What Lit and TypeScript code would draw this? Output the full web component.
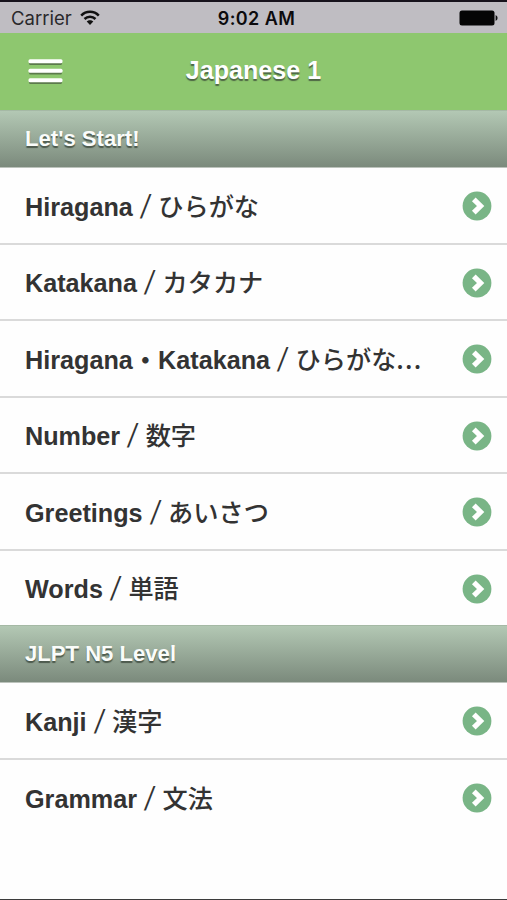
import { LitElement, html, css } from "lit";
import { customElement } from "lit/decorators.js";

interface Lesson { en: string; ja: string; en2?: string; cut?: boolean; }
interface Section { title: string; lessons: Lesson[]; }

const SECTIONS: Section[] = [
  {
    title: "Let's Start!",
    lessons: [
      { en: "Hiragana", ja: "ひらがな" },
      { en: "Katakana", ja: "カタカナ" },
      { en: "Hiragana", en2: "Katakana", ja: "ひらがな", cut: true },
      { en: "Number", ja: "数字" },
      { en: "Greetings", ja: "あいさつ" },
      { en: "Words", ja: "単語" },
    ],
  },
  {
    title: "JLPT N5 Level",
    lessons: [
      { en: "Kanji", ja: "漢字" },
      { en: "Grammar", ja: "文法" },
    ],
  },
];

@customElement("app-root")
export class AppRoot extends LitElement {
  static styles = css`
    :host {
      display: flex;
      flex-direction: column;
      box-sizing: border-box;
      height: 900px;
      background: #fefefe;
      border-bottom: 1px solid #3c3c3c;
      font-family: "Liberation Sans", "Noto Sans CJK JP", sans-serif;
      overflow: hidden;
    }
    .status {
      box-sizing: border-box;
      flex: none;
      height: 33px;
      border-top: 2px solid #17131c;
      background: #bfbdc2;
      display: grid;
      grid-template-columns: 1fr auto 1fr;
      align-items: center;
      padding: 1px 9px 0 11px;
      color: #111;
      font: 19px/28px "Inter", sans-serif;
    }
    .carrier { display: flex; align-items: center; gap: 8px; color: #29282b; font-size: 18.5px; }
    .wifi { display: block; margin-bottom: 1px; }
    .time { font-weight: 600; font-size: 18px; letter-spacing: 0.4px; color: #0c0b0d; padding: 2px 0 0 4px; }
    .battery { justify-self: end; display: block; }
    .nav {
      flex: none;
      box-sizing: border-box;
      height: 77px;
      background: #8ec76f;
      display: grid;
      grid-template-columns: 1fr auto 1fr;
      align-items: center;
      padding: 0 28px;
    }
    .menu { display: block; margin-bottom: 2px; }
    .title {
      color: #fff;
      font-weight: bold;
      font-size: 25.1px;
      line-height: 30px;
      text-shadow: 0 2px 1px rgba(50, 60, 50, 0.7);
      padding-bottom: 3px;
    }
    .heading {
      flex: none;
      box-sizing: border-box;
      height: 58px;
      padding: 0 25px;
      border-top: 1px solid #a5b9a5;
      border-bottom: 1px solid #bcc3bc;
      background: linear-gradient(#b3c8b4, #7b8a7c);
      color: #fafcfa;
      font-weight: bold;
      font-size: 22.1px;
      line-height: 56px;
      text-shadow: 0 2px 1px rgba(40, 50, 40, 0.65);
    }
    .row {
      flex: none;
      box-sizing: border-box;
      height: 76.4px;
      border-bottom: 2px solid #dadada;
      padding: 1.4px 15px 0 25px;
      display: flex;
      align-items: center;
      justify-content: space-between;
      color: #333;
    }
    .row.first { height: 77px; }
    .row.last { height: 74.4px; border-bottom: none; padding-top: 2px; }
    .label {
      font-weight: bold;
      font-size: 25.2px;
      line-height: 36px;
      white-space: pre;
      display: flex;
      padding-top: 1px;
    }
    .ja {
      font-family: "Noto Sans CJK JP", sans-serif;
      font-weight: 500;
      font-size: 25.2px;
      margin-top: -2px;
    }
    .slash {
      font-family: "Noto Sans CJK JP", sans-serif;
      font-weight: 500;
      width: 25.5px;
      text-align: center;
      margin-top: -4px;
      transform: skewX(-6deg);
    }
    .dot { font-family: "Noto Sans CJK JP", sans-serif; width: 25.3px; margin-top: -1px; }
    .dots { letter-spacing: 1.2px; }
    .go { display: block; flex: none; }
  `;

  private renderRow(l: Lesson, pos: string) {
    return html`<div class="row ${pos}">
      <div class="label"><span>${l.en}</span>${l.en2
        ? html`<span class="dot">・</span><span>${l.en2}</span>`
        : ""}<span class="slash"> / </span><span class="ja">${l.ja}${l.cut
        ? html`<span class="dots">...</span>`
        : ""}</span></div>
      <svg class="go" width="30" height="30" viewBox="0 0 30 30">
        <circle cx="15" cy="15" r="14.4" fill="#79b586" />
        <path d="M11.8 8.3 L18.6 15 L11.8 21.7" fill="none" stroke="#fff" stroke-width="5.2" />
      </svg>
    </div>`;
  }

  render() {
    return html`
      <div class="status">
        <div class="carrier">
          <span>Carrier</span>
          <svg class="wifi" width="20" height="16" viewBox="0 0 20 16">
            <g fill="none" stroke="#111" stroke-width="2.5">
              <path d="M1.2 5.6 C6 .6 14 .6 18.8 5.6" />
              <path d="M4.5 9 C7.6 5.9 12.4 5.9 15.5 9" />
            </g>
            <path d="M10 15 L6.7 11.6 C8.5 9.8 11.5 9.8 13.3 11.6 Z" fill="#111" />
          </svg>
        </div>
        <span class="time">9:02 AM</span>
        <svg class="battery" width="39" height="16" viewBox="0 0 39 16">
          <rect x=".5" y=".5" width="35" height="15" rx="2.5" fill="#050505" />
          <path d="M36.6 5 Q38.6 6 38.6 8 Q38.6 10 36.6 11 Z" fill="#111" />
        </svg>
      </div>
      <div class="nav">
        <svg class="menu" width="36" height="28" viewBox="0 0 36 28">
          <g fill="#5c7a4c">
            <rect x="1" y="4" width="33" height="4" rx="1.5" />
            <rect x="1" y="13.5" width="33" height="4" rx="1.5" />
            <rect x="1" y="23" width="33" height="4" rx="1.5" />
          </g>
          <g fill="#fff">
            <rect x=".5" y="2.3" width="34" height="4" rx="1.5" />
            <rect x=".5" y="11.8" width="34" height="4" rx="1.5" />
            <rect x=".5" y="21.3" width="34" height="4" rx="1.5" />
          </g>
        </svg>
        <span class="title">Japanese 1</span>
      </div>
      ${SECTIONS.map((s) => html`
        <div class="heading">${s.title}</div>
        ${s.lessons.map((l, j) =>
          this.renderRow(l, j === 0 ? "first" : j === s.lessons.length - 1 ? "last" : ""))}
      `)}
    `;
  }
}
